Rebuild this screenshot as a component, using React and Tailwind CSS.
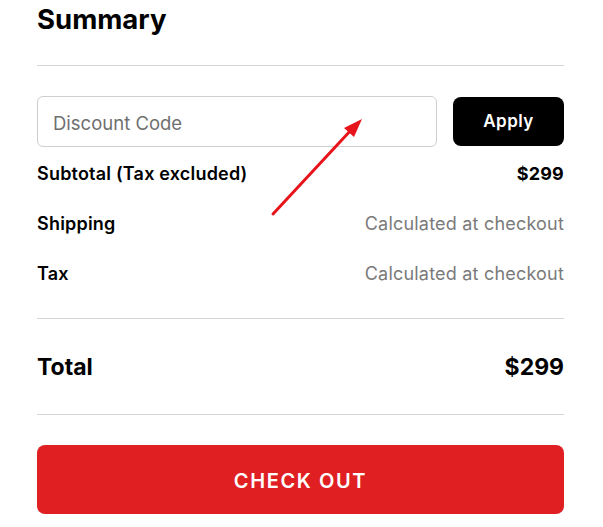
import React from "react";

const rows = [
  { label: "Subtotal (Tax excluded)", value: "$299", strong: true },
  { label: "Shipping", value: "Calculated at checkout" },
  { label: "Tax", value: "Calculated at checkout" },
];

export default function App() {
  return (
    <div className="relative min-h-screen bg-white" style={{ fontFamily: "Inter, 'Liberation Sans', sans-serif" }}>
      <div className="ml-[37px] w-[527px]">
        <h1 className="pt-[1px] text-[27.5px] font-bold leading-[36px] text-black">Summary</h1>

        <div className="mt-[28px] h-px bg-[#d6d6d6]" />

        <div className="mt-[30px] flex items-center gap-4">
          <input
            placeholder="Discount Code"
            className="h-[51px] flex-1 rounded-md border border-[#cfcfcf] px-[15px] pt-[2px] text-[18.5px] text-black outline-none placeholder:text-[#6f6f6f]"
          />
          <button className="h-[49px] w-[111px] rounded-lg bg-black pt-[1px] text-[17px] font-semibold tracking-[0.5px] text-white">
            Apply
          </button>
        </div>

        {rows.map((r) => (
          <div key={r.label} className="flex h-[50px] items-center justify-between pt-[2px] text-[18px] tracking-[0.2px]">
            <span className="font-semibold text-black">{r.label}</span>
            <span className={r.strong ? "font-bold text-black" : "text-[#7a7a7a]"}>{r.value}</span>
          </div>
        ))}

        <div className="mt-[21px] h-px bg-[#d6d6d6]" />

        <div className="flex h-[95px] items-center justify-between pt-[2px] text-[23px] font-bold text-black">
          <span>Total</span>
          <span>$299</span>
        </div>

        <div className="h-px bg-[#d6d6d6]" />

        <button className="mt-[30px] h-[69px] w-full rounded-lg bg-[#e01f22] pt-[2px] text-[20px] font-semibold tracking-[1.6px] text-white">
          CHECK OUT
        </button>
      </div>

      <svg className="pointer-events-none absolute left-0 top-0" width="603" height="527">
        <line x1="273" y1="214" x2="352" y2="129" stroke="#e8141b" strokeWidth="3" strokeLinecap="round" />
        <polygon points="362,119 344,128 354,137" fill="#e8141b" />
      </svg>
    </div>
  );
}
